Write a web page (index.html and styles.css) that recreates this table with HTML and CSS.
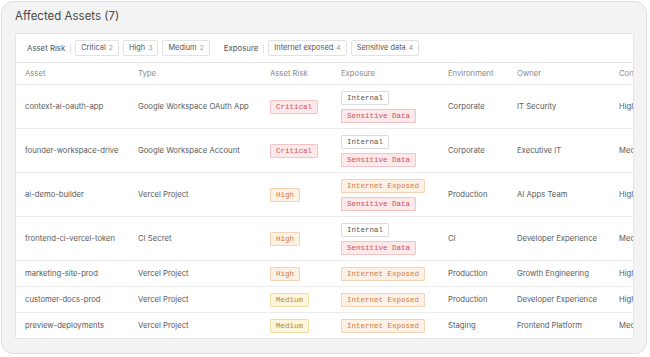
FILE: index.html
```html
<!DOCTYPE html>
<html lang="en">
<head>
  <meta charset="UTF-8" />
  <title>Affected Assets</title>
  <link rel="stylesheet" href="styles.css">
</head>
<body>
  <section class="card">
    <h2 class="card-title">Affected Assets (7)</h2>

    <div class="panel">
      <!-- filters -->
      <div class="filters">
        <span class="filter-label">Asset Risk</span>
        <span class="filter-sep"></span>
        <span class="chip">Critical <em>2</em></span>
        <span class="chip">High <em>3</em></span>
        <span class="chip">Medium <em>2</em></span>
        <span class="filter-label spaced">Exposure</span>
        <span class="filter-sep"></span>
        <span class="chip">Internet exposed <em>4</em></span>
        <span class="chip">Sensitive data <em>4</em></span>
      </div>

      <!-- assets table -->
      <table class="assets">
        <colgroup>
          <col style="width:113px">
          <col style="width:132px">
          <col style="width:71px">
          <col style="width:107px">
          <col style="width:69px">
          <col style="width:102px">
          <col style="width:80px">
        </colgroup>
        <thead>
          <tr>
            <th>Asset</th>
            <th>Type</th>
            <th>Asset Risk</th>
            <th>Exposure</th>
            <th>Environment</th>
            <th>Owner</th>
            <th>Confidence</th>
          </tr>
        </thead>
        <tbody>
          <tr>
            <td>context-ai-oauth-app</td>
            <td>Google Workspace OAuth App</td>
            <td><span class="tag critical">Critical</span></td>
            <td><div class="tags"><span class="tag neutral">Internal</span><span class="tag critical">Sensitive Data</span></div></td>
            <td>Corporate</td>
            <td>IT Security</td>
            <td>High</td>
          </tr>
          <tr>
            <td>founder-workspace-drive</td>
            <td>Google Workspace Account</td>
            <td><span class="tag critical">Critical</span></td>
            <td><div class="tags"><span class="tag neutral">Internal</span><span class="tag critical">Sensitive Data</span></div></td>
            <td>Corporate</td>
            <td>Executive IT</td>
            <td>Medium</td>
          </tr>
          <tr>
            <td>ai-demo-builder</td>
            <td>Vercel Project</td>
            <td><span class="tag high">High</span></td>
            <td><div class="tags"><span class="tag high">Internet Exposed</span><span class="tag critical">Sensitive Data</span></div></td>
            <td>Production</td>
            <td>AI Apps Team</td>
            <td>High</td>
          </tr>
          <tr>
            <td>frontend-ci-vercel-token</td>
            <td>CI Secret</td>
            <td><span class="tag high">High</span></td>
            <td><div class="tags"><span class="tag neutral">Internal</span><span class="tag critical">Sensitive Data</span></div></td>
            <td>CI</td>
            <td>Developer Experience</td>
            <td>Medium</td>
          </tr>
          <tr>
            <td>marketing-site-prod</td>
            <td>Vercel Project</td>
            <td><span class="tag high">High</span></td>
            <td><div class="tags"><span class="tag high">Internet Exposed</span></div></td>
            <td>Production</td>
            <td>Growth Engineering</td>
            <td>High</td>
          </tr>
          <tr>
            <td>customer-docs-prod</td>
            <td>Vercel Project</td>
            <td><span class="tag medium">Medium</span></td>
            <td><div class="tags"><span class="tag high">Internet Exposed</span></div></td>
            <td>Production</td>
            <td>Developer Experience</td>
            <td>High</td>
          </tr>
          <tr>
            <td>preview-deployments</td>
            <td>Vercel Project</td>
            <td><span class="tag medium">Medium</span></td>
            <td><div class="tags"><span class="tag high">Internet Exposed</span></div></td>
            <td>Staging</td>
            <td>Frontend Platform</td>
            <td>Medium</td>
          </tr>
        </tbody>
      </table>
    </div>
  </section>
</body>
</html>
```

FILE: styles.css
```css
:root {
  --card-bg: #f3f3f3;
  --line: #e4e4e4;
  --row-line: #ededed;
  --text: #5a5a5a;
  --muted: #8a8a8a;
  --font-body: 'Inter', 'Liberation Sans', sans-serif;
  --font-mono: 'Liberation Mono', 'DejaVu Sans Mono', monospace;
}

body {
  margin: 0;
  background: #fff;
  font-family: var(--font-body);
  color: var(--text);
}

.card {
  margin: 1px 3px 0 1px;
  height: 353px;
  box-sizing: border-box;
  background: var(--card-bg);
  border: 1px solid #dedede;
  border-radius: 12px;
  padding: 7px 12px 14px 13px;
  display: flex;
  flex-direction: column;
}

.card-title {
  margin: 0 0 10px;
  font-size: 11.5px;
  font-weight: 400;
  color: #484848;
  line-height: 14px;
}

.panel {
  background: #fff;
  border: 1px solid var(--line);
  border-radius: 2px;
  overflow: hidden;
  flex: 1;
}

/* filter bar */
.filters {
  display: flex;
  align-items: center;
  gap: 4px;
  height: 28px;
  padding: 0 11px;
  border-bottom: 1px solid var(--line);
  font-size: 7.4px;
}

.filter-label {
  color: #555;
  font-size: 7.8px;
}

.filter-label.spaced {
  margin-left: 10px;
}

.filter-sep {
  width: 1px;
  height: 9px;
  background: #e2e2e2;
  margin: 0 0 0 1px;
}

.chip {
  border: 1px solid #e2e2e2;
  border-radius: 2px;
  padding: 0 5px;
  line-height: 14px;
  color: #555;
  white-space: nowrap;
}

.chip em {
  font-style: normal;
  color: #999;
  font-size: 6.8px;
  margin-left: 1px;
}

/* table */
.assets {
  width: 674px;
  table-layout: fixed;
  border-collapse: collapse;
  font-size: 7.7px;
}

.assets th {
  text-align: left;
  font-weight: 400;
  color: var(--muted);
  height: 21px;
  padding: 0 9px;
  border-bottom: 1px solid var(--row-line);
  white-space: nowrap;
}

.assets td {
  padding: 6px 9px 5px;
  border-bottom: 1px solid var(--row-line);
  vertical-align: middle;
  white-space: nowrap;
  line-height: 14px;
}

.assets tbody tr:last-child td {
  border-bottom: none;
}

.tags {
  display: flex;
  flex-direction: column;
  align-items: flex-start;
  gap: 4px;
}

.tag {
  display: inline-block;
  font-family: var(--font-mono);
  font-size: 7.5px;
  line-height: 12px;
  padding: 0 5px;
  border: 1px solid;
  border-radius: 1px;
  vertical-align: middle;
}

.tag.neutral {
  background: #fff;
  border-color: #dcdcdc;
  color: #555;
}

.tag.critical {
  background: #fde9e9;
  border-color: #f3c4c6;
  color: #cf4f5c;
}

.tag.high {
  background: #fdf0e5;
  border-color: #f3d2b6;
  color: #d47a44;
}

.tag.medium {
  background: #fdf6dd;
  border-color: #efdfa6;
  color: #b08d3a;
}
```
